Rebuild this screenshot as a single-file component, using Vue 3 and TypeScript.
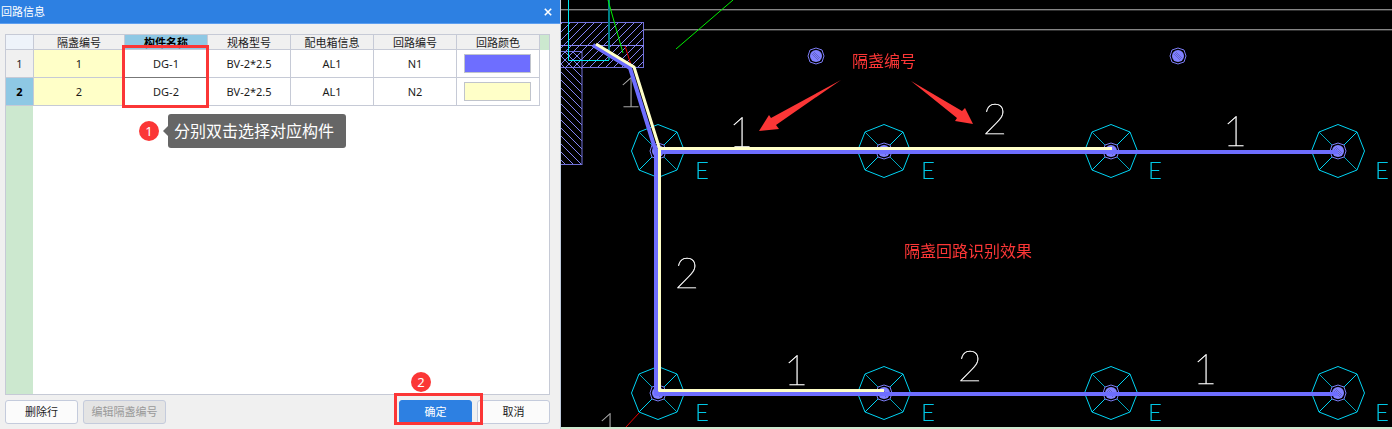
<script setup lang="ts">
import { ref } from 'vue'

interface Circuit {
  lamp: string
  part: string
  spec: string
  box: string
  code: string
  color: string
}

interface Mark {
  text: string
  x: number
  y: number
  dim?: boolean
}

const columns = ['隔盏编号', '构件名称', '规格型号', '配电箱信息', '回路编号', '回路颜色']

const circuits: Circuit[] = [
  { lamp: '1', part: 'DG-1', spec: 'BV-2*2.5', box: 'AL1', code: 'N1', color: '#6e6eff' },
  { lamp: '2', part: 'DG-2', spec: 'BV-2*2.5', box: 'AL1', code: 'N2', color: '#ffffc8' },
]

const selected = ref(1)

const lamps = [151, 393].flatMap((y) => [97, 323, 550, 777].map((x) => ({ x, y })))
const posts = [
  { x: 255, y: 56 },
  { x: 617, y: 56 },
]

const marks: Mark[] = [
  { text: '1', x: 69, y: 107, dim: true },
  { text: '1', x: 180, y: 147 },
  { text: '2', x: 434, y: 134 },
  { text: '1', x: 674, y: 146 },
  { text: '2', x: 126, y: 288 },
  { text: '1', x: 235, y: 385 },
  { text: '2', x: 409, y: 381 },
  { text: '1', x: 644, y: 384 },
  { text: '1', x: 48, y: 443, dim: true },
]
</script>

<template>
  <main class="workspace">
    <section class="dialog" aria-labelledby="dialog-title">
      <header class="titlebar">
        <h1 id="dialog-title">回路信息</h1>
        <button class="close" type="button" aria-label="关闭">
          <svg width="8" height="8" viewBox="0 0 10 10"><path d="M1 1L9 9M9 1L1 9" /></svg>
        </button>
      </header>

      <div class="sheet">
        <table>
          <colgroup>
            <col class="c-index" />
            <col class="c-lamp" />
            <col class="c-part" />
            <col />
            <col />
            <col />
            <col />
            <col class="c-rest" />
          </colgroup>
          <thead>
            <tr>
              <td class="corner"></td>
              <th v-for="(name, i) in columns" :key="name" scope="col" :class="{ current: i === 1 }">
                <span>{{ name }}</span>
              </th>
              <td class="rest"></td>
            </tr>
          </thead>
          <tbody>
            <tr v-for="(row, i) in circuits" :key="row.code" @click="selected = i">
              <th scope="row" :class="{ current: selected === i }">{{ i + 1 }}</th>
              <td class="lamp">{{ row.lamp }}</td>
              <td class="part">{{ row.part }}</td>
              <td>{{ row.spec }}</td>
              <td>{{ row.box }}</td>
              <td>{{ row.code }}</td>
              <td><i class="swatch" :style="{ background: row.color }"></i></td>
              <td class="blank"></td>
            </tr>
          </tbody>
        </table>
        <div class="gutter"></div>
        <div class="frame frame-part"></div>
        <div class="hint">
          <span class="badge">1</span>
          <span class="bubble">分别双击选择对应构件</span>
        </div>
      </div>

      <footer class="actions">
        <button class="btn" type="button">删除行</button>
        <button class="btn wide" type="button" disabled>编辑隔盏编号</button>
        <div class="confirm">
          <button class="btn primary" type="button">确定</button>
          <div class="frame frame-ok"></div>
          <span class="badge badge-ok">2</span>
        </div>
        <button class="btn" type="button">取消</button>
      </footer>
    </section>

    <section class="drawing" aria-label="隔盏回路识别效果">
      <svg class="scene" viewBox="0 0 831 427" preserveAspectRatio="xMinYMin slice">
        <defs>
          <pattern id="hatch-up" width="8" height="8" patternUnits="userSpaceOnUse">
            <path d="M-1 9L9 -1M-1 1L1 -1M7 9L9 7" class="hatch" />
          </pattern>
          <pattern id="hatch-down" width="8" height="8" patternUnits="userSpaceOnUse">
            <path d="M-1 -1L9 9M7 -1L9 1M-1 7L1 9" class="hatch" />
          </pattern>
          <g id="post">
            <path d="M0 -8L6 -6L8 0L6 6L0 8L-6 6L-8 0L-6 -6Z" class="ring" />
            <circle r="6" class="core" />
            <path d="M-4 -2L2 4M-2 -4L4 2M-3 -3L3 3" class="grain" />
          </g>
          <g id="lamp">
            <path d="M0 -26.5L19 -19L26.5 0L19 19L0 26.5L-19 19L-26.5 0L-19 -19Z" class="cyan" />
            <path d="M6 -6L19 -19M-6 6L-19 19" class="cyan" />
            <path d="M-6 -6L-19 -19M6 6L19 19" class="cyan soft" />
          </g>
        </defs>

        <path d="M0 9.5H831M83 29.5H831" class="wall" />
        <path d="M0 10.5H831M83 30.5H831" class="wall under" />
        <rect x="-1" y="22.5" width="83.5" height="45" fill="url(#hatch-up)" class="block" />
        <path d="M0 45.5H83" class="hatch" />
        <rect x="-1" y="51.5" width="22" height="113" fill="url(#hatch-down)" class="block" />
        <path d="M7.5 0V60.5H48" class="aqua" />
        <path d="M48 0V60" class="teal" />
        <path d="M47 0L62 53M172 0L115 49" class="green" />
        <path d="M64 46L70 65M78 413L65 427" class="red" />

        <text
          v-for="(m, i) in marks"
          :key="i"
          :x="m.x"
          :y="m.y"
          class="mark"
          :class="{ dim: m.dim }"
        >{{ m.text }}</text>
        <g v-for="lamp in lamps" :key="`${lamp.x}-${lamp.y}`">
          <use href="#lamp" :x="lamp.x" :y="lamp.y" />
          <use href="#post" :x="lamp.x" :y="lamp.y" />
          <text :x="lamp.x + 44" :y="lamp.y + 28" class="tag">E</text>
        </g>
        <use v-for="p in posts" :key="p.x" href="#post" :x="p.x" :y="p.y" />

        <path d="M32 45L69 68L95 152H777M95 152V394H777" class="wire blue" />
        <path d="M35 44L73 67L98.5 148.5H551M98.5 149V390.5H323" class="wire cream" />
        <path d="M280 80L210 118L208 115L198 131L218 129L215 125Z" class="arrow" />
        <path d="M350 81L396 118L394 121L412 124L404 108L401 111Z" class="arrow" />
        <text x="323" y="67" class="note" text-anchor="middle">隔盏编号</text>
        <text x="407" y="257" class="note" text-anchor="middle">隔盏回路识别效果</text>
      </svg>
    </section>
  </main>
</template>

<style>
body {
  margin: 0;
}
</style>

<style scoped>
.workspace {
  display: grid;
  grid-template-columns: 561px minmax(0, 1fr);
  min-height: 100vh;
  font: 11px/14px 'Noto Sans', 'Noto Sans CJK SC', sans-serif;
  color: #1c1c1c;
}
.workspace * {
  box-sizing: border-box;
}
.dialog {
  display: flex;
  flex-direction: column;
  background: #f0f0f0;
  border-right: 1px solid #c0cbdc;
}
.titlebar {
  display: flex;
  align-items: center;
  justify-content: space-between;
  height: 24px;
  padding: 0 8px 0 1px;
  background: #2d80e2;
  border-bottom: 1px solid #5d9ff0;
  color: #fff;
}
h1 {
  margin: 0;
  font-size: 11px;
  font-weight: 400;
}
.close {
  display: flex;
  padding: 0;
  border: 0;
  background: none;
}
.close path {
  stroke: #fff;
  stroke-width: 2;
}
.sheet {
  position: relative;
  display: flex;
  flex-direction: column;
  flex: 1;
  margin: 10px 10px 5px 5px;
  border: 1px solid #c6cad6;
  background: #fff;
}
table {
  width: 100%;
  table-layout: fixed;
  border-collapse: separate;
  border-spacing: 0;
}
.c-index {
  width: 28px;
}
.c-lamp {
  width: 91px;
}
.c-part {
  width: 83px;
}
.c-rest {
  width: 9px;
}
th,
td {
  height: 28px;
  padding: 0;
  border-right: 1px solid #c6cad6;
  border-bottom: 1px solid #c6cad6;
  text-align: center;
  vertical-align: middle;
  font-weight: 400;
}
thead th,
thead td {
  height: 15px;
  background: #f0f0f0;
}
thead span {
  display: block;
  height: 14px;
  line-height: 16px;
  overflow: hidden;
}
thead .corner {
  background: #eef3fa;
}
thead .rest {
  background: #cce8cf;
  border: 0;
}
tbody th {
  background: #f0f0f0;
}
th.current {
  background: #8ec8e4;
  font-weight: 700;
  color: #000;
}
tr:first-child .part {
  border-bottom-color: #777;
}
.lamp {
  background: #ffffc8;
}
.blank {
  border: 0;
}
.swatch {
  display: block;
  height: 19px;
  margin: 0 8px 0 7px;
  border: 1px solid #c0c4cc;
}
.gutter {
  flex: 1;
  width: 27px;
  background: #cce8cf;
}
.frame {
  position: absolute;
  border: 3px solid #fb3636;
}
.frame-part {
  left: 116px;
  top: 10px;
  width: 87px;
  height: 63px;
}
.frame-ok {
  left: -5px;
  top: -7px;
  width: 89px;
  height: 32px;
}
.hint {
  position: absolute;
  left: 133px;
  top: 79px;
  display: flex;
  align-items: center;
  gap: 9px;
}
.badge {
  width: 20px;
  height: 20px;
  border-radius: 50%;
  background: #fb3636;
  color: #fff;
  font-size: 13px;
  line-height: 20px;
  text-align: center;
}
.badge-ok {
  position: absolute;
  left: 12px;
  top: -28px;
}
.bubble {
  position: relative;
  padding: 5px 12px 5px 6px;
  border-radius: 3px;
  background: #666;
  color: #fff;
  font-size: 16px;
  line-height: 24px;
}
.bubble::before {
  content: '';
  position: absolute;
  left: -5px;
  top: 12px;
  border: 5px solid transparent;
  border-left: 0;
  border-right-color: #666;
}
.actions {
  display: flex;
  gap: 5px;
  padding: 0 10px 5px 5px;
}
.btn {
  width: 73px;
  height: 24px;
  padding: 0;
  border: 1px solid #c4cbdc;
  border-radius: 3px;
  background: #fbfbfb;
  color: #1c1c1c;
  font: inherit;
}
.btn.wide {
  width: 83px;
}
.btn:disabled {
  background: #e4e4e4;
  color: #999;
}
.btn.primary {
  border-color: #2d80e2;
  background: #2d80e2;
  color: #fff;
}
.confirm {
  position: relative;
  margin-left: auto;
}
.drawing {
  position: relative;
  background: #000;
  border-bottom: 2px solid #cce8cf;
  overflow: hidden;
}
.scene {
  position: absolute;
  inset: 0;
  width: 100%;
  height: 100%;
  fill: none;
  will-change: transform;
}
.hatch {
  stroke: #8484f4;
}
.block {
  stroke: #7070d8;
}
.wall {
  stroke: #858585;
}
.wall.under {
  stroke: #303030;
}
.aqua {
  stroke: #00e5ee;
}
.teal {
  stroke: #007f86;
  stroke-width: 2;
}
.green {
  stroke: #00f000;
}
.red {
  stroke: #e80000;
}
.cyan {
  stroke: #00d4f4;
}
.soft {
  stroke: #00a8c0;
}
.ring {
  stroke: #7c7cf4;
}
.core {
  fill: #8080ff;
}
.grain {
  stroke: #6464c8;
}
.wire {
  stroke-linejoin: round;
}
.blue {
  stroke: #6e6eff;
  stroke-width: 4;
}
.cream {
  stroke: #ffffc8;
  stroke-width: 3;
}
.arrow {
  fill: #fb3636;
}
.note {
  fill: #fb3636;
  font-size: 16px;
}
.mark,
.tag {
  font-family: Lato, 'Noto Sans CJK SC', sans-serif;
  text-anchor: middle;
}
.mark {
  font-weight: 100;
  fill: #fff;
  stroke: #fff;
  stroke-width: 0.4;
  font-size: 42px;
}
.mark.dim {
  fill: #a0a0a0;
  stroke: #a0a0a0;
}
.tag {
  font-weight: 300;
  fill: #00c8e6;
  font-size: 24px;
}
</style>
